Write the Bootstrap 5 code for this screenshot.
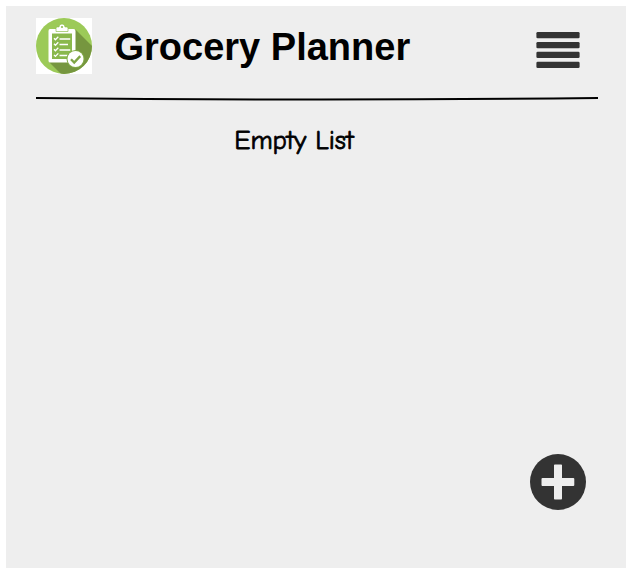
<!DOCTYPE html>
<html lang="en">
<head>
<meta charset="utf-8">
<meta name="viewport" content="width=device-width, initial-scale=1">
<title>Grocery Planner</title>
<link href="https://cdn.jsdelivr.net/npm/bootstrap@5.3.0/dist/css/bootstrap.min.css" rel="stylesheet">
<style>
body{background:#fff;padding:6px;font-family:"Liberation Sans",Arial,sans-serif;color:#000}
.planner{background:#eee;height:562px;padding:12px 28px 0 30px}
.brand-title{font-size:38px;font-weight:700;line-height:56px;height:56px;padding-top:1px;margin-left:22.5px;white-space:nowrap}
.menu-btn{width:44px;height:36px;margin:14px 18px 0 0}
.rule{width:562px;height:8px;margin-top:21px}
.empty-text{font-family:"Comic Sans MS","Comic Neue",Lato,sans-serif;font-size:27px;line-height:32px;margin:22px 0 0 198px;width:140px;height:32px;overflow:visible;stroke:#000;stroke-width:.8px;stroke-linejoin:round}
.add-btn{width:56px;height:56px;margin:0 12px 58px 0}
svg{display:block}
</style>
</head>
<body>
<main class="planner d-flex flex-column">
<header class="d-flex align-items-start">
<svg width="56" height="56" viewBox="0 0 56 56" role="img" aria-label="Grocery list">
<defs><clipPath id="disc"><circle cx="28" cy="28" r="28"/></clipPath></defs>
<rect width="56" height="56" fill="#fff"/>
<g clip-path="url(#disc)">
<rect width="56" height="56" fill="#9cca58"/>
<path d="M39.5 11.5L58 30V58H27L12.5 43.5Z" fill="#76963f"/>
</g>
<path d="M14 11H37.500Q39.500 11 39.500 13V43Q39.500 44.500 37.500 44.500H14Q12.500 44.500 12.500 43V13Q12.500 11 14 11Z" fill="#fff"/>
<path d="M16 15.500H36V41H16Z" fill="#8ab84c"/>
<path d="M20 13.500V10.300Q20 8.900 21.500 8.900H23C23.300 7 24.400 6 26 6S28.700 7 29 8.900H30.500Q32 8.900 32 10.300V13.500Z" fill="#fff" stroke="#8fbe50" stroke-width=".7"/>
<circle cx="26" cy="9" r="1.1" fill="#91bd54"/>
<path d="M18 20.200l1.400 1.500 2.900-3M18 25.800l1.400 1.500 2.900-3M18 31.300l1.400 1.500 2.900-3M18 36.900l1.400 1.500 2.900-3" fill="none" stroke="#fff" stroke-width="1.3"/>
<path d="M23.500 21H34.200M23.500 26.500H32M23.500 32H34.200M23.500 37.500H31.500" stroke="#fff" stroke-width="1.6"/>
<circle cx="39.500" cy="41" r="9" fill="#83ac48"/>
<circle cx="39.500" cy="41" r="8" fill="#fff"/>
<path d="M35 41.300l3.200 3.300 6-6.500" fill="none" stroke="#7fa545" stroke-width="2.300"/>
</svg>
<h1 class="brand-title mb-0">Grocery Planner</h1>
<button class="menu-btn btn border-0 p-0 ms-auto" type="button" aria-label="Menu">
<svg width="44" height="36" viewBox="0 0 44 36" fill="#333"><rect x=".4" width="43.200" height="6.300" rx="1.300"/><rect x=".4" y="10" width="43.200" height="6.300" rx="1.300"/><rect x=".4" y="19.700" width="43.200" height="6.300" rx="1.300"/><rect x=".4" y="29.700" width="43.200" height="6.300" rx="1.300"/></svg>
</button>
</header>
<svg class="rule" viewBox="0 0 562 8" aria-hidden="true"><path d="M0 3Q290 6 562 3" fill="none" stroke="#000" stroke-width="2"/></svg>
<svg class="empty-text" viewBox="0 0 140 32"><text x=".2" y="24" textLength="119.500" lengthAdjust="spacingAndGlyphs">Empty List</text></svg>
<button class="add-btn btn border-0 p-0 mt-auto ms-auto" type="button" aria-label="Add item">
<svg width="56" height="56" viewBox="0 0 56 56"><circle cx="28" cy="28" r="28" fill="#333"/><path d="M24.800 10.400H31.200Q32 10.400 32 11.200V24H43.300Q44.300 24 44.300 25V31Q44.300 32 43.300 32H32V44.600Q32 45.500 31.200 45.500H24.800Q24 45.500 24 44.600V32H12.500Q11.500 32 11.500 31V25Q11.500 24 12.500 24H24V11.200Q24 10.400 24.800 10.400Z" fill="#eee"/></svg>
</button>
</main>
<script src="https://cdn.jsdelivr.net/npm/bootstrap@5.3.0/dist/js/bootstrap.bundle.min.js"></script>
</body>
</html>
